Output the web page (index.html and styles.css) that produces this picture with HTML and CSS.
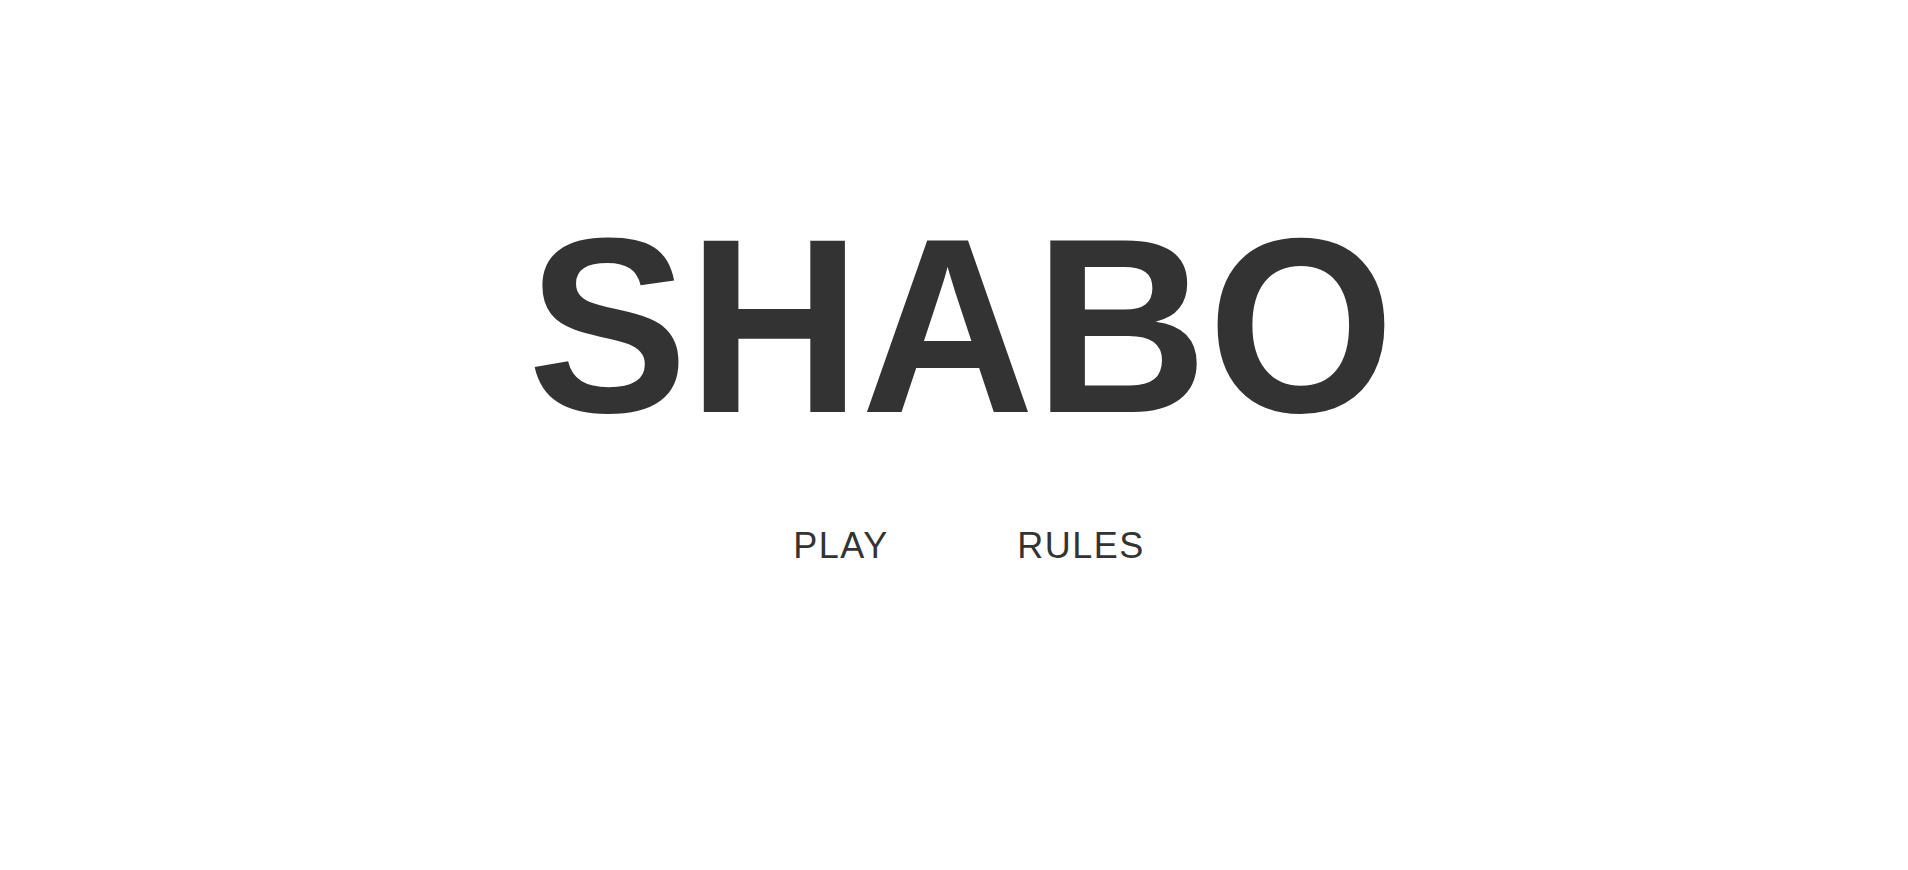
FILE: index.html
```html
<!DOCTYPE html>
<html lang="en">
<head>
    <meta charset="UTF-8">
    <meta name="viewport" content="width=device-width, initial-scale=1.0">
    <title>Shabo</title>
    <link rel="stylesheet" href="styles.css">
</head>
<body>
    <div class="container">
        <h1 class="title">SHABO</h1>
        <nav class="menu">
            <a href="#" class="menu-item">PLAY</a>
            <a href="#" class="menu-item">RULES</a>
        </nav>
    </div>
</body>
</html>
```

FILE: styles.css
```css
body {
    font-family: "Liberation Sans", Arial, sans-serif;
    background-color: #fff;
    color: #333;
    margin: 0;
    padding: 0;
}

.container {
    display: flex;
    flex-direction: column;
    align-items: center;
    padding-top: 209px;
    padding-left: 14px;
}

.title {
    margin: 0;
    font-size: 240px;
    font-weight: bold;
    line-height: 1;
    /* stretch a little taller, anchored on the baseline */
    transform: scaleY(1.04);
    transform-origin: 50% 203px;
}

.menu {
    display: flex;
    margin-top: 79px;
}

.menu-item {
    width: 240px;
    text-align: center;
    font-size: 36px;
    line-height: 1;
    letter-spacing: 1.5px;
    color: #333;
    text-decoration: none;
}
```
